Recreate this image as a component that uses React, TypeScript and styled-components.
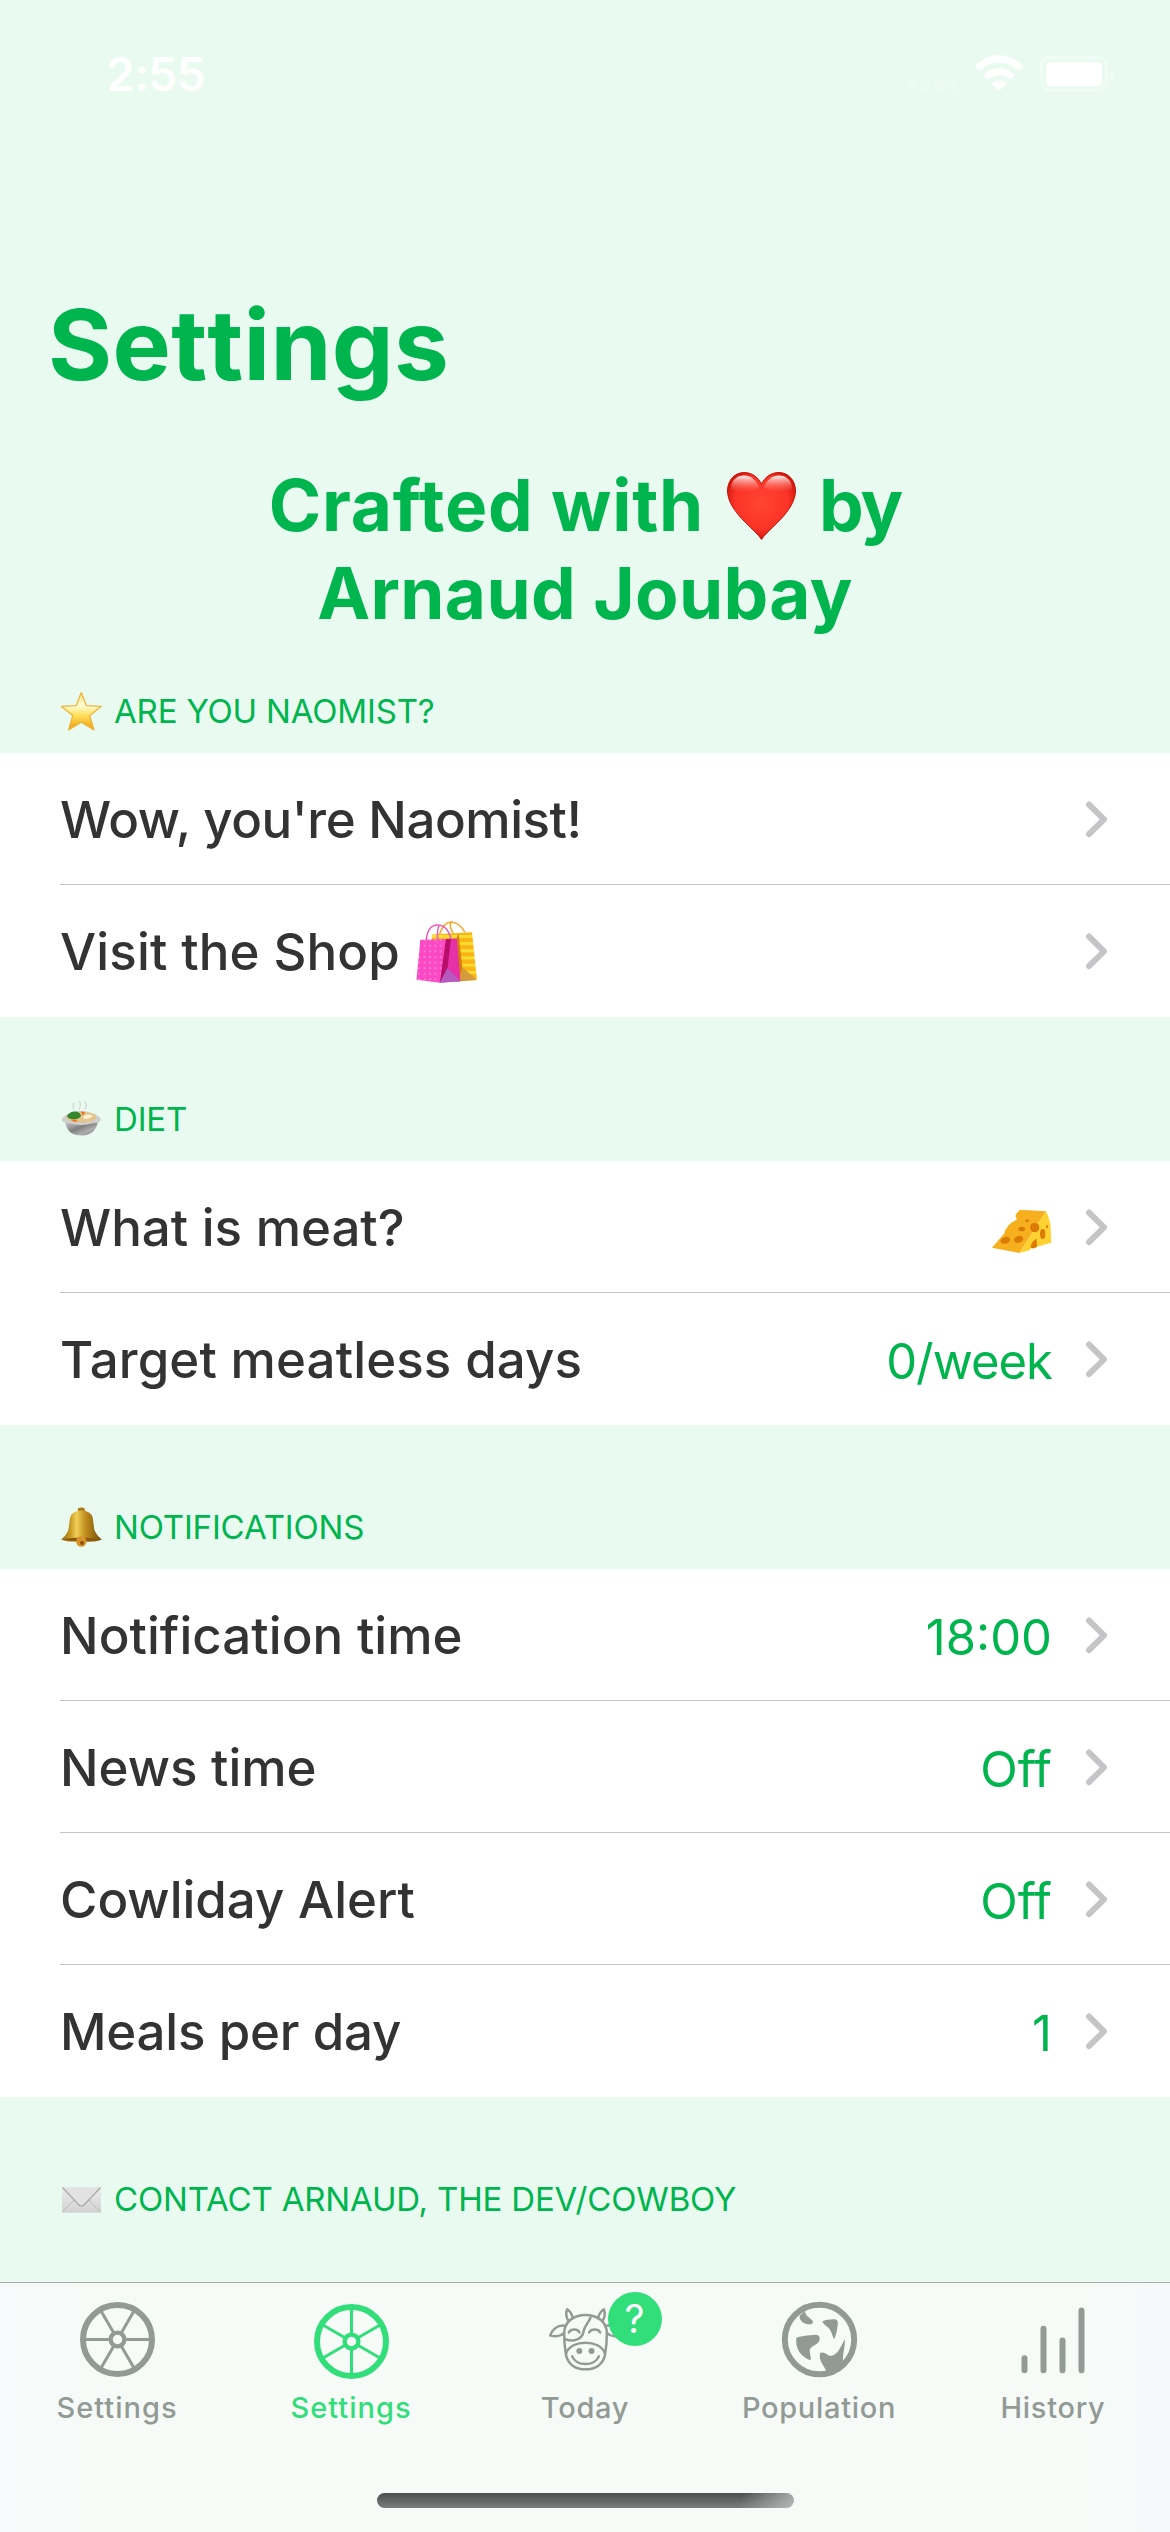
import React from "react";
import styled, { createGlobalStyle } from "styled-components";

const green = "#00b44e";
const bright = "#32de7a";
const gray = "#929a95";
const mint = "#e9fbf1";

const Global = createGlobalStyle`
  body { margin: 0; background: ${mint}; }
  * { box-sizing: border-box; }
  svg { display: block; flex: none; }
`;

const Screen = styled.div`
  width: 1170px;
  height: 2532px;
  display: flex;
  flex-direction: column;
  overflow: hidden;
  background: ${mint};
  font-family: Inter, "Liberation Sans", sans-serif;
  font-variant-ligatures: no-common-ligatures;
  white-space: nowrap;
`;

const StatusBar = styled.div`
  height: 148px;
  flex: none;
  display: flex;
  align-items: center;
  justify-content: space-between;
  padding: 0 54px 0 106px;
`;

const Clock = styled.div`
  font-size: 46px;
  font-weight: 600;
  line-height: 56px;
  letter-spacing: -0.5px;
  color: #fff;
`;

const StatusIcons = styled.div`
  display: flex;
  align-items: center;
`;

const Content = styled.main`
  flex: 1;
  min-height: 0;
  overflow: hidden;
`;

const Title = styled.h1`
  margin: 137px 0 0;
  padding-left: 48px;
  font-size: 98px;
  line-height: 120px;
  font-weight: 700;
  font-kerning: none;
  letter-spacing: 0.3px;
  color: ${green};
`;

const Credit = styled.h2`
  margin: 57px 0 0;
  display: flex;
  flex-direction: column;
  align-items: center;
  font-size: 71px;
  line-height: 87.5px;
  font-weight: 700;
  color: ${green};
`;

const CreditLine = styled.span`
  display: flex;
  align-items: center;
  gap: 23px;
`;

const CreditText = styled.span<{ $tracking: number }>`
  letter-spacing: ${(p) => p.$tracking}px;
`;

const SectionHeader = styled.h3<{ $height: number }>`
  margin: 0;
  height: ${(p) => p.$height}px;
  padding: 0 60px 22px;
  display: flex;
  align-items: flex-end;
  gap: 12px;
  font-size: 33px;
  line-height: 40px;
  font-weight: 400;
  letter-spacing: -0.17px;
  color: ${green};
  svg { margin-bottom: -1px; }
`;

const List = styled.div`
  background: #fff;
  padding-left: 60px;
`;

const Row = styled.div`
  height: 132px;
  padding-right: 63px;
  display: flex;
  align-items: center;
  border-bottom: 1px solid #c4c4c6;
  &:last-child { border-bottom-color: transparent; }
`;

const Label = styled.span<{ $tracking?: number }>`
  flex: 1;
  display: flex;
  align-items: center;
  gap: 16px;
  padding-top: 2px;
  font-size: 51px;
  line-height: 62px;
  font-weight: 500;
  letter-spacing: ${(p) => p.$tracking ?? 0}px;
  color: #333;
`;

const Value = styled.span<{ $tracking?: number }>`
  padding-top: 7px;
  margin-right: 33px;
  font-size: 49px;
  line-height: 60px;
  letter-spacing: ${(p) => p.$tracking ?? 0}px;
  color: ${green};
`;

const TabBar = styled.nav`
  height: 250px;
  flex: none;
  border-top: 1px solid #a5b0aa;
  background: linear-gradient(90deg, #f6fafa 0, #f6fbf8 90px, #f6fbf8 1080px, #f6f9fa 1170px);
  display: flex;
  flex-direction: column;
  align-items: center;
`;

const Tabs = styled.div`
  width: 100%;
  height: 210px;
  display: flex;
`;

const Tab = styled.div<{ $active?: boolean; $tracking?: number }>`
  flex: 1;
  padding-top: 18px;
  display: flex;
  flex-direction: column;
  align-items: center;
  gap: 12px;
  font-size: 29px;
  line-height: 36px;
  font-weight: 500;
  letter-spacing: ${(p) => p.$tracking ?? 0.7}px;
  color: ${(p) => (p.$active ? bright : gray)};
`;

const IconBox = styled.div`
  position: relative;
  width: 77px;
  height: 77px;
`;

const Badge = styled.span`
  position: absolute;
  left: 61px;
  top: -9px;
  width: 54px;
  height: 54px;
  border-radius: 50%;
  background: ${bright};
  color: #fff;
  font-size: 39px;
  font-weight: 400;
  line-height: 54px;
  letter-spacing: 0;
  text-align: center;
`;

const HomeIndicator = styled.div`
  width: 417px;
  height: 15px;
  border-radius: 8px;
  background:
    linear-gradient(100deg, transparent 87%, rgba(200, 203, 201, 0.75) 100%),
    linear-gradient(#4c4e4d, #7b7e7c);
`;

function StatusGlyphs() {
  return (
    <StatusIcons>
      <svg width="67" height="38" viewBox="907 55 67 38" fill="#edfcf3">
        <circle cx="912" cy="86.3" r="5" />
        <circle cx="925.7" cy="86.3" r="5" />
        <circle cx="939.6" cy="86.3" r="5" />
        <circle cx="953.4" cy="86.3" r="5" />
      </svg>
      <svg width="66" height="38" viewBox="974 55 66 38" fill="#fff">
        <path d="M975.5 65.3 C988 51.9 1010 51.9 1022.7 65.3 Q1023.6 66.3 1022.8 67.2 L1019.6 70.2 Q1018.7 71 1017.7 70 C1007 60.2 991 60.2 980.5 70 Q979.5 71 978.6 70.2 L975.4 67.2 Q974.6 66.3 975.5 65.3Z" />
        <path d="M984 74.2 C992.5 65.9 1005.7 65.9 1014.2 74.2 Q1015.2 75.1 1014.3 76 L1011 79.2 Q1010.2 80 1009.2 79.1 C1003.5 74 994.7 74 989 79.1 Q988 80 987.2 79.2 L983.9 76 Q983 75.1 984 74.2Z" />
        <path d="M992.7 82.8 C996.4 79.8 1001.8 79.8 1005.5 82.8 Q1006.5 83.7 1005.6 84.6 L999.9 90.3 Q999.1 91 998.3 90.3 L992.6 84.6 Q991.7 83.7 992.7 82.8Z" />
      </svg>
      <svg width="76" height="38" viewBox="1040 55 76 38">
        <rect x="1041.5" y="57.5" width="65" height="33" rx="9.5" fill="none" stroke="#f0fdf6" strokeWidth="3" />
        <rect x="1046" y="62" width="56" height="24" rx="4.5" fill="#fff" />
        <path d="M1111 68 Q1115 70 1115 73.7 Q1115 77.500 1111 79.500Z" fill="#f0fdf6" />
      </svg>
    </StatusIcons>
  );
}

function Heart() {
  return (
    <svg width="69" height="68" viewBox="0 0 69 68">
      <defs>
        <radialGradient id="heart" cx="0.5" cy="0.45" r="0.6">
          <stop offset="0" stopColor="#ff4534" />
          <stop offset="0.65" stopColor="#fb3427" />
          <stop offset="1" stopColor="#c80d05" />
        </radialGradient>
        <linearGradient id="shine" x1="0" y1="0" x2="0" y2="1">
          <stop offset="0" stopColor="#fff" stopOpacity="0.95" />
          <stop offset="1" stopColor="#ff6a5c" stopOpacity="0" />
        </linearGradient>
      </defs>
      <path d="M34.500 67.500 C28 57 1 40 0.500 19 C0.500 8 8 0.500 17 0.500 C25 0.500 31 5 34.500 12 C38 5 44 0.500 52 0.500 C61 0.500 68.500 8 68.500 19 C68 40 41 57 34.500 67.500Z" fill="url(#heart)" stroke="#c4150c" strokeWidth="1" />
      <path d="M4 17 C4 8 10 3.500 17 3.500 C24 3.500 29 8 32 15 C24 22 12 22 4 17Z" fill="url(#shine)" />
      <path d="M65 17 C65 8 59 3.500 52 3.500 C45 3.500 40 8 37 15 C45 22 57 22 65 17Z" fill="url(#shine)" />
    </svg>
  );
}

function Star() {
  return (
    <svg width="42" height="42" viewBox="0 0 42 42">
      <defs>
        <linearGradient id="star" x1="0" y1="0" x2="0" y2="1">
          <stop offset="0" stopColor="#ffe680" />
          <stop offset="0.35" stopColor="#fffbd8" />
          <stop offset="0.6" stopColor="#ffe25e" />
          <stop offset="1" stopColor="#f09a0c" />
        </linearGradient>
      </defs>
      <path d="M21.300 2.500 L26.400 15.600 L41 16.400 L29.800 25.600 L34 40 L21.300 32.300 L8.600 40 L12.700 25.600 L1.500 16.400 L16.200 15.600Z" fill="url(#star)" stroke="#eeb43a" strokeWidth="1.300" strokeLinejoin="round" />
    </svg>
  );
}

function Bowl() {
  return (
    <svg width="42" height="42" viewBox="0 0 42 42">
      <defs>
        <linearGradient id="bowl" x1="0" y1="0" x2="1" y2="1">
          <stop offset="0" stopColor="#d4d4d4" />
          <stop offset="0.45" stopColor="#808080" />
          <stop offset="0.7" stopColor="#b0b0b0" />
          <stop offset="1" stopColor="#5c5c5c" />
        </linearGradient>
      </defs>
      <g fill="none" stroke="#d4dcd7" strokeWidth="1.400" strokeLinecap="round">
        <path d="M14 11 Q12 8 14 5" />
        <path d="M19 11 Q22 7 19 3" />
        <path d="M25 11 Q28 7 25 4" />
      </g>
      <path d="M5 23 C6 32 11 37.500 21.300 37.500 C31 37.500 37 32 38 23Z" fill="url(#bowl)" />
      <path d="M1.800 21.500 Q3 18 9 15.500 Q21 10 33 15.500 Q40 18 41 21.500 Q40 25 34 25 Q21 29 8 25 Q2 25 1.800 21.500Z" fill="#cfcfcf" />
      <ellipse cx="21.300" cy="19.200" rx="15" ry="5.500" fill="#e3c48a" />
      <path d="M7 18 Q9 14 14 13.500 Q20 13 21 18 Q18 22 12 21 Q8 21 7 18Z" fill="#33862b" />
      <path d="M21 13.500 L25 14 L23 18Z M11 21.500 L16 21.500 L17 24 Q13 24 11 21.500Z" fill="#f2701d" />
      <path d="M23 18 Q29 15 33 18 Q30 21 24 21Z" fill="#fff3d3" />
    </svg>
  );
}

function Bell() {
  return (
    <svg width="42" height="42" viewBox="0 0 42 42">
      <defs>
        <linearGradient id="bell" x1="0" y1="0" x2="1" y2="0">
          <stop offset="0" stopColor="#8f6712" />
          <stop offset="0.22" stopColor="#c89722" />
          <stop offset="0.38" stopColor="#f0cf57" />
          <stop offset="0.6" stopColor="#c08e1c" />
          <stop offset="1" stopColor="#6f4a0b" />
        </linearGradient>
      </defs>
      <ellipse cx="21.300" cy="3.800" rx="3.600" ry="2.300" fill="#a87c1a" />
      <path d="M1.200 33.500 Q7 29 8.500 23 L10 12 Q12 4.500 21.300 4.500 Q31 4.500 32.800 12 L34.200 23 Q36 29 41.800 33.500 Q38 36 21.300 36 Q5 36 1.200 33.500Z" fill="url(#bell)" />
      <path d="M3 33.300 Q21 29.500 40 33.300 Q34 35.500 21.300 35.500 Q9 35.500 3 33.300Z" fill="#8a5a10" />
      <circle cx="21.300" cy="35.500" r="5.200" fill="#d9922b" />
      <circle cx="22" cy="37" r="2" fill="#8c5210" />
    </svg>
  );
}

function Envelope() {
  return (
    <svg width="42" height="42" viewBox="0 0 42 42">
      <defs>
        <linearGradient id="mail" x1="0" y1="0" x2="0" y2="1">
          <stop offset="0" stopColor="#ececec" />
          <stop offset="1" stopColor="#d2d2d2" />
        </linearGradient>
      </defs>
      <rect x="2" y="8.800" width="39" height="26" rx="0.800" fill="url(#mail)" />
      <path d="M2.500 34 L15 21 M40.500 34 L28 21" stroke="#bcbcbe" strokeWidth="1" />
      <path d="M2.500 9.500 L18 26 Q21.500 30 25 26 L40.500 9.500" fill="#e2e2e3" stroke="#a9a9ac" strokeWidth="1.200" />
    </svg>
  );
}

function Bags() {
  return (
    <svg width="62" height="64" viewBox="-0.500 -0.500 62 64">
      <defs>
        <pattern id="dots" width="5.400" height="5.600" patternUnits="userSpaceOnUse">
          <rect width="5.400" height="5.600" fill="#fb49c4" />
          <circle cx="2.700" cy="2.800" r="0.800" fill="#ffb0ea" />
        </pattern>
        <pattern id="stripes" width="10" height="7.200" patternUnits="userSpaceOnUse">
          <rect width="10" height="7.200" fill="#fbb414" />
          <rect width="10" height="3" fill="#f5df35" />
        </pattern>
      </defs>
      <path d="M23 14 Q27 1.500 35 1.500 Q43 2 48.500 12" fill="none" stroke="#f3a92c" strokeWidth="1.500" />
      <path d="M37 14 Q31 2 36 1.500" fill="none" stroke="#f3a92c" strokeWidth="1.500" />
      <path d="M15.300 14 L55.500 11.700 L60.500 59.500 L40 61 L15 40Z" fill="url(#stripes)" />
      <path d="M42 12.500 L46 48 L42 60.500 L40.500 17Z" fill="#d97e0a" />
      <path d="M46 47 L60.500 59.500 L43 60.700Z" fill="#d49a3c" />
      <path d="M3.800 19.300 L29.500 18.600 L23.300 62.300 L0 59.300Z" fill="url(#dots)" />
      <path d="M29.500 18.600 L40.500 18 L44 60.700 L23.300 62.300Z" fill="#e631a6" />
      <path d="M29.500 18.600 L34.500 18.400 L31 48 L23.300 62.300Z" fill="#b80f6d" />
      <path d="M31 47.500 L44 60.700 L23.300 62.300Z" fill="#b558c0" />
      <path d="M9.500 23.500 Q10 5.500 20 4.500 Q31 4 34.500 18.500 M21.500 23 Q20 8 23 4.500" fill="none" stroke="#ef5cb8" strokeWidth="1.500" />
    </svg>
  );
}

function Cheese() {
  return (
    <svg width="60" height="60" viewBox="422 177 180 180">
      <path d="M506 206 L584 211 L504 336 L422 320 L460 276 Q459 267 467 260 Q474 246 490 240 L497 234 Q489 226 496 217Z" fill="#f6b01e" />
      <path d="M584 211 Q594 230 597 248 L600 305 L557 317 Q548 325 539 322 L534 328 L504 336Z" fill="#ffd232" />
      <g fill="#dd7a05">
        <ellipse cx="462" cy="298" rx="15" ry="10" transform="rotate(-18 462 298)" />
        <ellipse cx="502" cy="295" rx="14" ry="10" transform="rotate(-18 502 295)" />
        <ellipse cx="511" cy="264" rx="10" ry="7" />
        <ellipse cx="527" cy="239" rx="6" ry="4" />
        <ellipse cx="550" cy="260" rx="14" ry="14" />
        <ellipse cx="574" cy="279" rx="8" ry="15" />
        <ellipse cx="587" cy="257" rx="3" ry="5" />
        <path d="M538 315 Q543 299 556 293 L557 317 Q548 324 538 320Z" />
      </g>
    </svg>
  );
}

function Chevron() {
  return (
    <svg width="22" height="38" viewBox="1085 1208 22 38">
      <path d="M1089 1212.500 L1104 1227.300 L1089 1242.200" fill="none" stroke="#c5c5c7" strokeWidth="6" strokeLinecap="round" strokeLinejoin="round" />
    </svg>
  );
}

function Wheel({ angle, dy = 0 }: { angle: number; dy?: number }) {
  return (
    <svg width="77" height="79" viewBox={`-38.500 ${-38.5 - dy} 77 79`} fill="none" stroke="currentColor">
      <circle r="34.500" strokeWidth="6" />
      <circle r="6.900" strokeWidth="4.300" />
      {[0, 60, 120, 180, 240, 300].map((a) => (
        <path key={a} d="M8 0 H33" strokeWidth="3" transform={`rotate(${a + angle})`} />
      ))}
    </svg>
  );
}

function Cow() {
  return (
    <svg width="77" height="77" viewBox="77.500 93 231 231" fill="none" stroke="currentColor" strokeWidth="7.500" strokeLinecap="round" strokeLinejoin="round">
      <path d="M129 190 C129 155 158 135 193 135 C228 135 257 155 257 190 C257 215 255 235 252 252 C247 284 222 298 193 298 C164 298 139 284 134 252 C131 235 129 215 129 190Z" />
      <path d="M135 250 C142 228 168 218 193 218 C218 218 244 228 251 250" />
      <path d="M153 259 C165 290 221 290 233 259" />
      <path d="M143 187 C150 176 168 176 175 187 M204 187 C211 176 230 176 237 187" />
      <path d="M208 143 C202 158 189 170 187 185 C183 207 158 217 134 208" />
      <path d="M142 153 C134 141 133 130 138 118 C147 124 153 133 155 145 M244 153 C252 141 253 130 248 118 C239 124 233 133 231 145" />
      <path d="M130 167 C108 164 93 180 87 196 C100 200 118 200 127 190 M256 167 C278 164 293 180 299 196 C286 200 268 200 259 190" />
      <g fill="currentColor" stroke="none">
        <circle cx="174.500" cy="243" r="9" />
        <circle cx="211" cy="243" r="9" />
      </g>
    </svg>
  );
}

function Globe() {
  return (
    <svg width="77" height="77" viewBox="780 93 231 231" fill="currentColor">
      <circle cx="895.500" cy="208.500" r="104" fill="none" stroke="currentColor" strokeWidth="18" />
      <path d="M836 137 C833 152 852 164 868 163 C876 162 878 156 873 150 C866 142 852 138 852 122Z" />
      <path d="M905 157 C901 151 925 148 941 148 C950 149 952 156 950 165 C948 182 945 196 940 207 C936 206 934 190 926 178 C918 168 908 164 905 157Z" />
      <path d="M826 204 C835 197 865 196 884 194 C895 194 898 203 895 212 C890 225 868 228 866 240 C866 252 872 264 868 271 C850 264 822 245 826 204Z" />
      <path d="M897 250 C905 244 914 250 922 256 C935 262 948 250 955 238 C962 226 968 215 971 207 C974 225 965 250 966 272 L982 268 L950 306 L916 306 C912 288 892 275 897 250Z" />
    </svg>
  );
}

function Bars() {
  return (
    <svg width="77" height="77" viewBox="1014.500 2301 77 77" stroke="currentColor" strokeWidth="6" strokeLinecap="round">
      <path d="M1024 2358.300 V2370.300 M1043 2328.700 V2370.300 M1062 2340.500 V2370.300 M1081 2310.500 V2370.300" />
    </svg>
  );
}

type RowData = {
  label: string;
  tracking?: number;
  icon?: React.ReactNode;
  value?: React.ReactNode;
  valueTracking?: number;
};
type SectionData = { title: string; icon: React.ReactNode; height: number; rows: RowData[] };

const sections: SectionData[] = [
  {
    title: "ARE YOU NAOMIST?",
    icon: <Star />,
    height: 116,
    rows: [
      { label: "Wow, you're Naomist!", tracking: -0.45 },
      { label: "Visit the Shop", tracking: 0.15, icon: <Bags /> },
    ],
  },
  {
    title: "DIET",
    icon: <Bowl />,
    height: 144,
    rows: [
      { label: "What is meat?", value: <Cheese /> },
      { label: "Target meatless days", tracking: 0.12, value: "0/week", valueTracking: -1 },
    ],
  },
  {
    title: "NOTIFICATIONS",
    icon: <Bell />,
    height: 144,
    rows: [
      { label: "Notification time", tracking: 0.06, value: "18:00" },
      { label: "News time", value: "Off" },
      { label: "Cowliday Alert", value: "Off" },
      { label: "Meals per day", tracking: -0.2, value: "1" },
    ],
  },
  { title: "CONTACT ARNAUD, THE DEV/COWBOY", icon: <Envelope />, height: 144, rows: [] },
];

export default function App() {
  return (
    <Screen>
      <Global />
      <StatusBar>
        <Clock>2:55</Clock>
        <StatusGlyphs />
      </StatusBar>
      <Content>
        <Title>Settings</Title>
        <Credit>
          <CreditLine>
            <CreditText $tracking={0.75}>Crafted with</CreditText>
            <Heart />
            <CreditText $tracking={-2}>by</CreditText>
          </CreditLine>
          <CreditLine>
            <CreditText $tracking={0.35}>Arnaud Joubay</CreditText>
          </CreditLine>
        </Credit>
        {sections.map((s) => (
          <section key={s.title}>
            <SectionHeader $height={s.height}>
              {s.icon}
              <span>{s.title}</span>
            </SectionHeader>
            <List>
              {s.rows.map((r) => (
                <Row key={r.label}>
                  <Label $tracking={r.tracking}>
                    <span>{r.label}</span>
                    {r.icon}
                  </Label>
                  {r.value && <Value $tracking={r.valueTracking}>{r.value}</Value>}
                  <Chevron />
                </Row>
              ))}
            </List>
          </section>
        ))}
      </Content>
      <TabBar>
        <Tabs>
          <Tab $tracking={1}>
            <IconBox><Wheel angle={0} /></IconBox>
            <span>Settings</span>
          </Tab>
          <Tab $active $tracking={1}>
            <IconBox><Wheel angle={30} dy={2} /></IconBox>
            <span>Settings</span>
          </Tab>
          <Tab>
            <IconBox>
              <Cow />
              <Badge>?</Badge>
            </IconBox>
            <span>Today</span>
          </Tab>
          <Tab>
            <IconBox><Globe /></IconBox>
            <span>Population</span>
          </Tab>
          <Tab>
            <IconBox><Bars /></IconBox>
            <span>History</span>
          </Tab>
        </Tabs>
        <HomeIndicator />
      </TabBar>
    </Screen>
  );
}
